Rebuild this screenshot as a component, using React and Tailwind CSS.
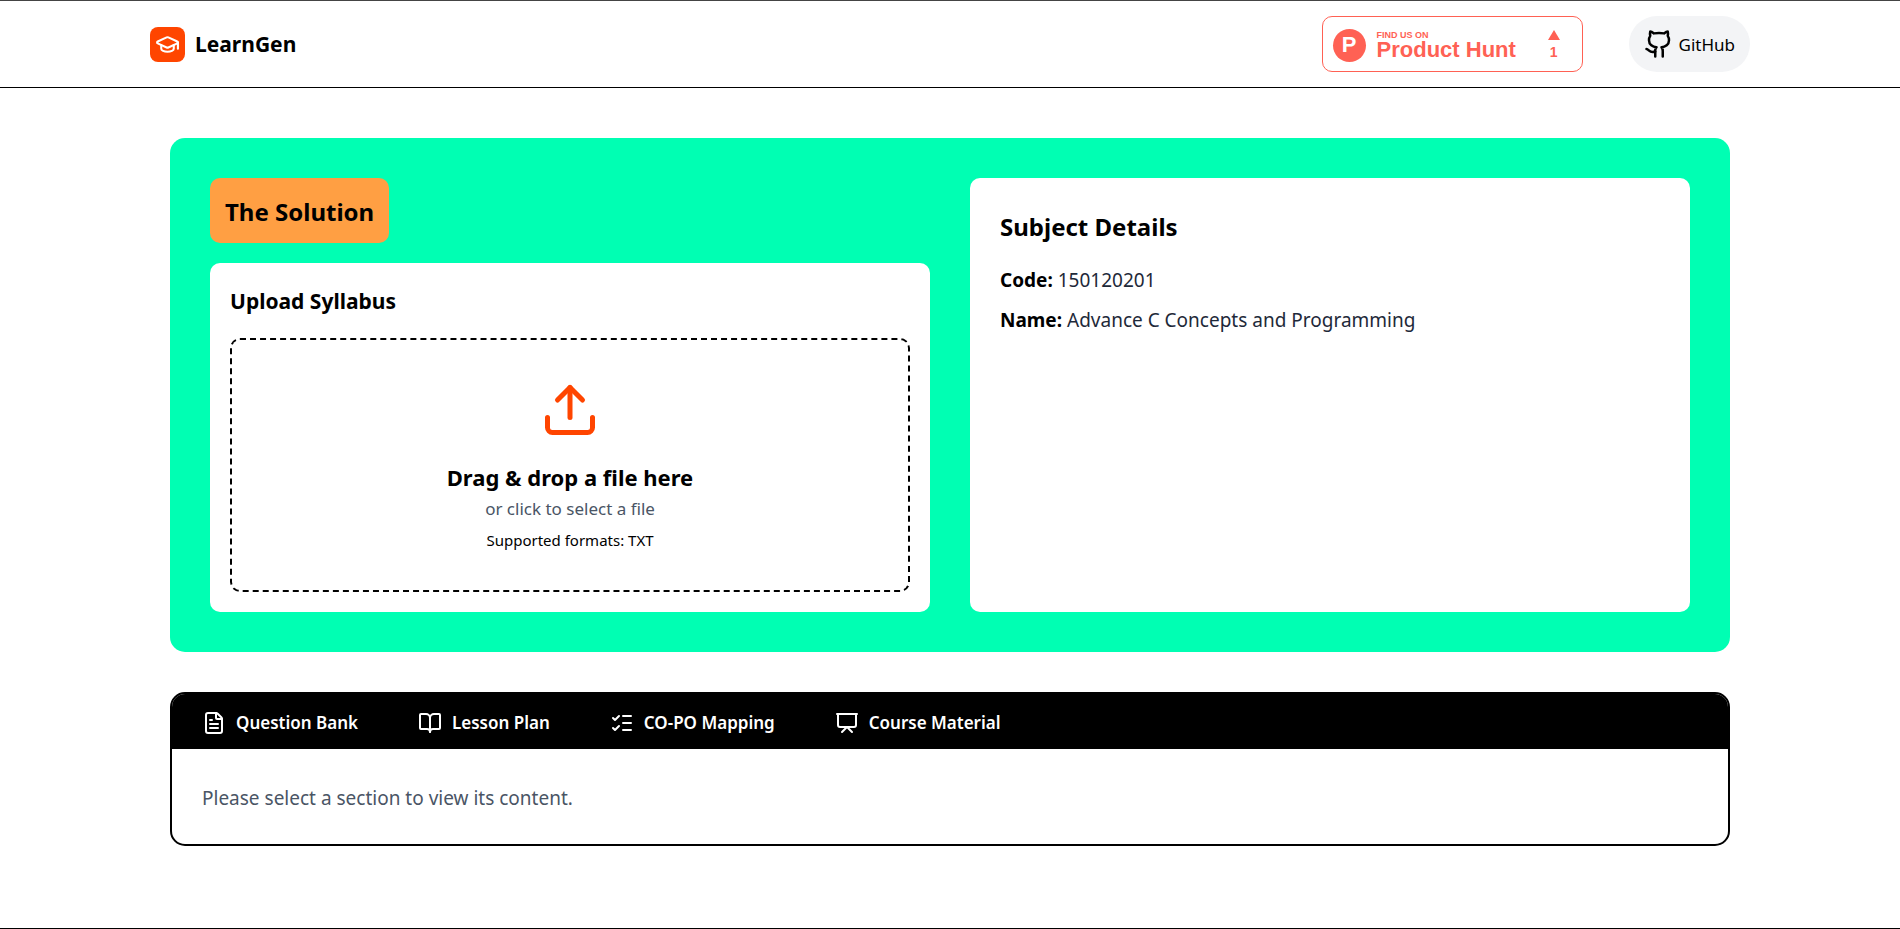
import { useState } from "react";
import {
  BookOpen,
  FileText,
  Github,
  GraduationCap,
  ListChecks,
  Presentation,
  Upload,
} from "lucide-react";

const tabs = [
  { id: "questions", label: "Question Bank", icon: FileText },
  { id: "lessons", label: "Lesson Plan", icon: BookOpen },
  { id: "mapping", label: "CO-PO Mapping", icon: ListChecks },
  { id: "material", label: "Course Material", icon: Presentation },
];

function ProductHuntBadge() {
  return (
    <a
      href="#product-hunt"
      className="flex h-14 w-[261px] items-center rounded-[10px] border border-[#ff6154] pt-0.5 pr-[22px] pl-2.5 font-['Liberation_Sans',Arial,sans-serif] font-bold text-[#ff6154]"
    >
      <span className="flex size-[33px] items-center justify-center rounded-full bg-[#ff6154] text-[22px] leading-none text-white">
        P
      </span>
      <span className="ml-[11px] flex flex-col">
        <span className="text-[9px] leading-[10px]">FIND US ON</span>
        <span className="text-[22px] leading-5">Product Hunt</span>
      </span>
      <span className="ml-auto flex flex-col items-center gap-1">
        <svg width="12" height="10" viewBox="0 0 12 10" fill="currentColor">
          <path d="M6 0l6 10H0z" />
        </svg>
        <span className="text-sm leading-4">1</span>
      </span>
    </a>
  );
}

function Header() {
  return (
    <header className="border-y border-t-[#444444] border-b-black">
      <div className="mx-auto flex max-w-[1600px] items-center justify-between py-[15px]">
        <a href="#home" className="flex items-center gap-2.5">
          <span className="rounded-lg bg-[#ff4500] p-[5px] text-white">
            <GraduationCap size={25} />
          </span>
          <span className="pt-0.5 text-[21px] font-bold">LearnGen</span>
        </a>
        <div className="flex gap-[46px]">
          <ProductHuntBadge />
          <a
            href="#github"
            className="flex items-center gap-[5px] rounded-full bg-gray-100 px-[15px] text-[17px]"
          >
            <Github size={30} />
            <span className="pt-0.5">GitHub</span>
          </a>
        </div>
      </div>
    </header>
  );
}

function UploadCard() {
  return (
    <section className="flex flex-1 flex-col rounded-[10px] bg-white p-5">
      <h3 className="mb-[18px] text-[21px] leading-[37px] font-bold">Upload Syllabus</h3>
      <label className="flex flex-1 cursor-pointer flex-col items-center rounded-[10px] border-2 border-dashed border-black p-10">
        <input type="file" accept=".txt" className="sr-only" />
        <Upload size={60} className="mb-5 text-[#ff4500]" />
        <span className="text-[22px] leading-[35px] font-bold">Drag &amp; drop a file here</span>
        <span className="mb-2 text-[17px] leading-7 text-gray-600">or click to select a file</span>
        <span className="text-[15px] leading-[19px]">Supported formats: TXT</span>
      </label>
    </section>
  );
}

function SubjectDetails({ code, name }) {
  return (
    <section className="rounded-[10px] bg-white p-[30px]">
      <h3 className="mb-3.5 text-2xl leading-[38px] font-bold">Subject Details</h3>
      <p className="text-[19px] leading-10 text-gray-800">
        <strong className="text-black">Code:</strong> {code}
      </p>
      <p className="text-[19px] leading-10 text-gray-800">
        <strong className="text-black">Name:</strong> {name}
      </p>
    </section>
  );
}

function Sections() {
  const [active, setActive] = useState(null);
  const current = tabs.find((tab) => tab.id === active);

  return (
    <section className="overflow-hidden rounded-[15px] border-2 border-black">
      <nav className="flex bg-black text-white">
        {tabs.map(({ id, label, icon: Icon }) => (
          <button
            key={id}
            onClick={() => setActive(id)}
            className="flex cursor-pointer items-center gap-2.5 px-[30px] pt-4 pb-3.5 text-[17px] leading-[25px] font-semibold"
          >
            <Icon size={24} />
            {label}
          </button>
        ))}
      </nav>
      <div className="px-[30px] pt-8 pb-7 text-[19px] leading-[35px] text-gray-600">
        {current ? current.label : "Please select a section to view its content."}
      </div>
    </section>
  );
}

export default function App() {
  return (
    <div className="flex min-h-screen flex-col bg-white font-['Segoe_UI','Noto_Sans',sans-serif] text-black">
      <Header />
      <main className="mx-auto flex w-full max-w-[1560px] flex-1 flex-col gap-10 py-[50px]">
        <div className="grid grid-cols-2 gap-10 rounded-[15px] bg-[#00ffb3] p-10">
          <div className="flex flex-col gap-5">
            <h2 className="self-start rounded-[10px] bg-[#ff9f43] px-[15px] pt-4 pb-3.5 text-2xl leading-[35px] font-bold">
              The Solution
            </h2>
            <UploadCard />
          </div>
          <SubjectDetails code="150120201" name="Advance C Concepts and Programming" />
        </div>
        <Sections />
      </main>
      <footer className="border-t border-black" />
    </div>
  );
}
